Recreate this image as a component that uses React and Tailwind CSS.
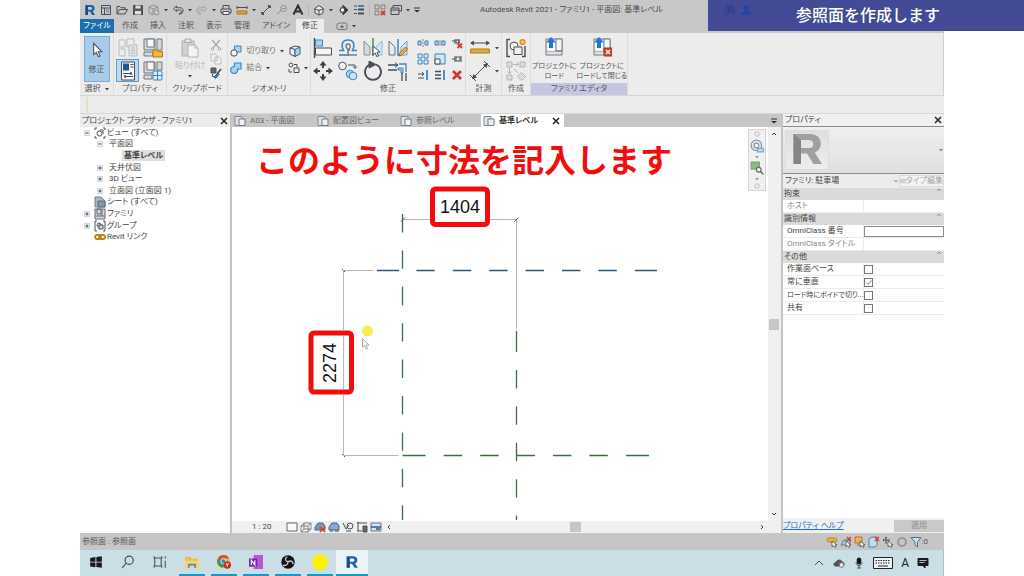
import { useState } from 'react';

const INK = '#484e54';
const BLUE = '#3c86c0';
const SKY = '#a9d2f0';

// Shared svg wrapper, each icon is drawn on its own grid
const Svg = ({ box = 12, className = 'size-3', children }) => (
  <svg
    viewBox={`0 0 ${box} ${box}`}
    className={`shrink-0 ${className}`}
    fill="none"
    stroke={INK}
    strokeWidth="1"
    aria-hidden="true"
  >
    {children}
  </svg>
);

const Caret = ({ color = '#444' }) => (
  <svg viewBox="0 0 4 4" className="size-1 shrink-0" aria-hidden="true">
    <path d="M0 1h4L2 3.4z" fill={color} />
  </svg>
);

const RevitMark = ({ className = 'size-3', color = '#1f5fa8', shade = '#174a86' }) => (
  <svg viewBox="0 0 12 12" className={`shrink-0 ${className}`} aria-hidden="true">
    <path fillRule="evenodd" fill={color} d="M1.5 1h5.3c2.4 0 3.8 1.2 3.8 3.2 0 1.5-.8 2.5-2 3L11 11H8.2L6 7.5H4V11H1.5zM4 3v2.700h2.600c1 0 1.500-.5 1.500-1.300S7.600 3 6.600 3z" />
    <path fill={shade} d="M1.500 1L4 3v8H1.500z" />
  </svg>
);

/* ---------- quick access bar ---------- */

const quickAccess = [
  { name: 'Revit', icon: <RevitMark /> },
  { name: 'ホーム', icon: <Svg><path d="M1.500 1.500h9v9h-9zM1.500 4h9M4.500 4v6.500" /><path d="M6 6h3M6 8h3" stroke={BLUE} /></Svg> },
  { name: '開く', icon: <Svg><path d="M1 10V2.500h3l1 1.200h4V5.500M1 10l2.500-4.500h8L9 10z" /></Svg> },
  { name: '保存', icon: <Svg><path d="M1.500 1.500h9v9h-9z" fill="#555b61" /><path d="M3.500 1.500h5v3h-5zM3 7h6v3.500H3z" fill="#dedede" stroke="none" /></Svg> },
  { name: '同期', icon: <Svg><g stroke="#929292"><path d="M1 3l4-2 5 2v3M1 3v6l4 2M1 3l4 2v6M5 5l5-2" /><circle cx="8.500" cy="8.500" r="2.500" /></g></Svg>, menu: true },
  { name: '元に戻す', icon: <Svg><path d="M4.500 2L1.500 4.800 4.500 7.500V6h3c3 0 2.500 3.500-.5 3.500M4.500 2v1.700h3.200c5 0 4.300 6.500-.7 6.500" /></Svg>, menu: true },
  { name: 'やり直し', icon: <Svg><path stroke="#a2a2a2" d="M7.500 2l3 2.800-3 2.700V6h-3c-3 0-2.500 3.500.5 3.500M7.500 2v1.700H4.300c-5 0-4.300 6.500.7 6.500" /></Svg>, menu: true },
  { name: '印刷', icon: <Svg><path d="M3 5V1.500h6V5M3 9H1V5h10v4H9" /><path d="M3 7.500h6v3H3z" fill="#f2f2f2" /></Svg> },
  { name: '計測', icon: <Svg><path d="M1 3.500h10M1 2v3M11 2v3" /><path d="M1 7h10v3H1z" fill="#e0a52f" stroke="#a87a1c" /></Svg>, menu: true },
  { name: '寸法', icon: <Svg><path d="M2 10l8-8M1 8l3 3M8 1l3 3" /><circle cx="2.500" cy="9.500" r="1" fill={INK} /><circle cx="9.500" cy="2.500" r="1" fill={INK} /></Svg> },
  { name: 'タグ', icon: <Svg><g stroke="#8c8c8c"><circle cx="7.500" cy="4.500" r="3" /><path d="M1 10l4-3.500M6 4.500h3" /></g></Svg> },
  { name: '文字', icon: <Svg><path d="M1.500 10.500L6 1.500l4.500 9M3.500 7.500h5" strokeWidth="2" stroke="#2d3035" /></Svg>, rule: true },
  { name: '3D ビュー', icon: <Svg><path d="M1 5l5-3.500L11 5M2 5v4l4 2 4-2V5L6 6.500z" fill="#e6e6e6" /><path d="M6 6.500V11" /></Svg>, menu: true },
  { name: '断面', icon: <Svg><circle cx="6" cy="6" r="3" fill="#f4f4f4" /><path d="M6 1l5 5-5 5z" fill="#30363b" /><circle cx="5.500" cy="6" r="2.200" fill="#f4f4f4" /></Svg> },
  { name: '細線', icon: <Svg><path d="M1 2h3M1 5.500h3M1 9.500h3" /><path d="M5 2h6" stroke={BLUE} strokeWidth="2" /><path d="M5 5.500h6M5 9.500h6" strokeWidth="2" /></Svg>, rule: true },
  { name: '非表示を閉じる', icon: <Svg><path d="M1 1h4v4H1zM7 1h4v4H7zM1 7h4v4H1z" stroke="#8a7e7e" /><path d="M7 7l4 4M11 7l-4 4" stroke="#d33a2f" strokeWidth="1.800" /></Svg> },
  { name: 'ウィンドウ切替', icon: <Svg><path d="M3 4V1.500h8.500V7H9M1 4h8v6.500H1zM1 6h8" /></Svg>, menu: true },
];

const QuickAccessBar = () => (
  <header className="flex h-[19px] items-center bg-[#c8c8c8]">
    <div className="flex items-center gap-1 pl-1">
      {quickAccess.map((item) => (
        <div key={item.name} className="flex items-center gap-1">
          <button type="button" aria-label={item.name}>{item.icon}</button>
          {item.menu && <Caret />}
          {item.rule && <span className="h-3 w-px bg-[#b5b5b5]" />}
        </div>
      ))}
      <svg viewBox="0 0 6 6" className="size-1.5" aria-hidden="true">
        <path d="M0 .5h6v1H0zM0 3h6L3 5.500z" fill="#333" />
      </svg>
    </div>
    <h1 className="ml-15 text-[8px] leading-3 whitespace-nowrap text-[#4b4b4b]">
      Autodesk Revit 2021 - ファミリ1 - 平面図: 基準レベル
    </h1>
  </header>
);

const RibbonTabs = () => {
  const [active, setActive] = useState('修正');
  return (
    <nav className="flex h-3.5 items-stretch bg-[#c8c8c8]">
      <button type="button" className="mr-0.5 w-[34px] bg-[#1a6fae] text-white">ファイル</button>
      {['作成', '挿入', '注釈', '表示', '管理', 'アドイン', '修正'].map((tab) => (
        <button
          key={tab}
          type="button"
          onClick={() => setActive(tab)}
          className={`px-1.5 ${active === tab ? 'bg-[#ececec] text-[#444]' : 'text-[#555]'}`}
        >
          {tab}
        </button>
      ))}
      <button type="button" aria-label="リボンを最小化" className="ml-3 flex items-center gap-1">
        <Svg className="h-3 w-3"><rect x="1" y="3" width="10" height="6.500" rx="2" stroke="#777" /><path d="M4 7.500h4L6 5z" fill="#555" stroke="none" /></Svg>
        <Caret />
      </button>
    </nav>
  );
};

/* ---------- ribbon ---------- */

const Panel = ({ title, width, menu, accent, children }) => (
  <section className={`flex shrink-0 flex-col border-r border-[#dcdcdc] ${width}`}>
    <div className="flex h-[50px] items-center justify-center pt-0.5">{children}</div>
    <h2 className={`flex h-3 items-center justify-center gap-1 whitespace-nowrap text-[#555] ${accent ? 'bg-[#c6c5e2]' : ''}`}>
      {title}
      {menu && <Caret />}
    </h2>
  </section>
);

const IconButton = ({ label, active, className = 'size-[23px]', children }) => (
  <button
    type="button"
    aria-label={label}
    className={`flex items-center justify-center ${className} ${active ? 'border border-[#5b9bcf] bg-[#bcdaf2]' : ''}`}
  >
    {children}
  </button>
);

const big = 'size-5';

const PropertyIcons = () => (
  <div className="grid grid-cols-2 gap-x-0.5">
    <IconButton label="ファミリ カテゴリ">
      <Svg box={20} className={big}><g stroke="#bdbdbd"><path d="M1 2h6v7H1zM9 1h7v8H9zM1 11h6v7H1z" fill="#ececec" /><path d="M11 7h8v11h-8z" fill="#e2e2e2" /><path d="M13 10h4M13 12.500h4M13 15h4" /></g></Svg>
    </IconButton>
    <IconButton label="ファミリ タイプ">
      <Svg box={20} className={big}><path d="M1 1h11v11H1zM14 1h5v11h-5zM1 14h9v4H1z" fill="#d5d8dc" stroke="#6f767d" /><path d="M4 1h7v8H4z" fill="#f7f7f7" stroke="#6f767d" /><path d="M10 12h4l1 1.500h4.500V19H10z" fill="#f5b92c" stroke="#b17b12" /></Svg>
    </IconButton>
    <IconButton label="プロパティ" active>
      <Svg box={20} className={big}><path d="M3.500 1h13v18h-13z" fill="#f5f7f9" /><path d="M5 2.500h6v7H5z" fill="#205a94" stroke="none" /><path d="M12.500 3.500h3M12.500 6h3M5 12.500h9M7 15.500h8" /><path d="M13 11v3M7 14v3" strokeWidth="1.500" /></Svg>
    </IconButton>
    <IconButton label="タイプ プロパティ">
      <Svg box={20} className={big}><path d="M1 1h11v11H1zM14 1h5v8h-5zM1 14h8v4H1z" fill="#d5d8dc" stroke="#6f767d" /><path d="M4 1h7v8H4z" fill="#f7f7f7" stroke="#6f767d" /><rect x="10" y="10" width="9" height="9" rx="1" fill="#d5eafa" stroke={BLUE} /><path d="M14.500 10v9M10 14.500h9" stroke={BLUE} /></Svg>
    </IconButton>
  </div>
);

const ClipboardIcons = () => (
  <div className="flex w-full justify-between pr-1 pl-2">
    <button type="button" className="flex flex-col items-center gap-0.5 text-[#b5b5b5]">
      <Svg box={20} className="size-5"><path d="M2 3h12v15H2z" fill="#d0d0d0" stroke="#b0b0b0" /><path d="M5 1h6v3.500H5z" fill="#e6e6e6" stroke="#aaa" /><path d="M8 7h7l3 3v9H8z" fill="#f3f3f3" stroke="#b5b5b5" /><path d="M15 7v3h3" stroke="#b5b5b5" /></Svg>
      <span className="leading-3">貼り付け</span>
      <Caret />
    </button>
    <div className="flex flex-col justify-between">
      <IconButton label="切り取り" className="size-3.5"><Svg><path d="M2 1l7 8M10 1L3 9" stroke="#aaa" strokeWidth="1.300" /><circle cx="2.500" cy="10" r="1.300" stroke="#aaa" /><circle cx="9.500" cy="10" r="1.300" stroke="#aaa" /></Svg></IconButton>
      <IconButton label="コピー" className="size-3.5"><Svg><path d="M1 1h4l2 2v5H1zM5 4h4l2 2v5H5z" fill="#f1f1f1" stroke="#bdbdbd" /></Svg></IconButton>
      <IconButton label="タイプ プロパティを一致" className="size-3.5"><Svg><path d="M1 1h5v5H1z" fill="#666" /><path d="M2.500 7v2.500h5" /><path d="M11 2L7 7" strokeWidth="1.800" /><path d="M8 6l1 1.500-3.500 4L4 10z" fill={BLUE} stroke="#26567d" /></Svg></IconButton>
    </div>
  </div>
);

const GeometryIcons = () => (
  <div className="grid grid-cols-[1fr_auto] gap-x-1 gap-y-1">
    <button type="button" className="flex items-center gap-1">
      <Svg><path d="M4.500 1h6.500v6H4.500z" fill={SKY} stroke={BLUE} /><circle cx="4" cy="8" r="3.200" fill="#f6f6f6" /></Svg>
      切り取り
      <Caret />
    </button>
    <IconButton label="面を分割" className="size-3.5"><Svg><path d="M1 3l5 1.500v7L1 9z" fill="#f2f2f2" /><path d="M6 4.500L11 2v7l-5 2.500z" fill={SKY} stroke="#37627f" /><path d="M1 3l5-2 5 1" /></Svg></IconButton>
    <button type="button" className="flex items-center gap-1">
      <Svg><path d="M4.500 1H11v6H7.500A3.500 3.500 0 1 1 4.500 4.500z" fill={SKY} stroke={BLUE} strokeWidth="1.200" /></Svg>
      結合
      <Caret />
    </button>
    <div className="flex items-center gap-1">
      <Svg><circle cx="3" cy="3" r="2" /><path d="M6 2.500h3v3M1 7v3h3M6 6h5v4.500H6z" /></Svg>
      <Caret />
    </div>
  </div>
);

const modifyLarge = [
  ['位置合わせ', <><path d="M1.500 0v20" strokeWidth="1.500" /><path d="M2.500 2h7v6h-7z" fill={SKY} stroke={BLUE} /><path d="M2.500 10h16v7h-16z" fill="#f5f5f5" /></>],
  ['オフセット', <><path d="M1 12.500h4.500C3 8 3.500 2 10 2s7 6 4.500 10.500H19" stroke={BLUE} strokeWidth="1.600" /><path d="M1 17h9V11C7 9 7.500 6 10 6s3 3 1 6v1" stroke="#5b6f80" strokeWidth="1.300" /><path d="M10 17h9" stroke="#5b6f80" strokeWidth="1.300" /></>],
  ['鏡像化 - 軸を選択', <><path d="M1 3l6 6v8H1z" fill="#d6d9dc" stroke="#8a8f94" /><path d="M19 3l-6 6v8h6z" fill="#cfe7f8" stroke="#8ab9dc" /><path d="M10 0v18" stroke="#3d9b45" strokeWidth="1.500" /><path d="M10 8l7 6-3 .3 1.500 3.700-1.700.6-1.500-3.500L10 17z" fill="#fff" /></>],
  ['鏡像化 - 軸を描画', <><path d="M1 3l6 6v8H1z" fill="#e9ebed" stroke="#6d7278" /><path d="M19 3l-6 6v8h6z" fill="#cfe7f8" stroke="#6ba6d2" /><path d="M10 1v17" stroke={BLUE} strokeWidth="1.500" /><path d="M17.500 9l2 2-5.500 6-3 1 .8-3z" fill="#f0b53a" stroke="#8f6a18" /></>],
  ['移動', <path fill="#3a3f44" stroke="none" d="M10 0l3.500 4.500H11V7H9V4.500H6.500zM10 20l-3.500-4.500H9V13h2v2.500h2.500zM0 10l4.500-3.500V9H7v2H4.500v2.500zM20 10l-4.500 3.500V11H13V9h2.500V6.500z" />],
  ['コピー', <><circle cx="4.500" cy="5" r="3.800" fill="#f7f7f7" /><path d="M10 4h7v3M15 5.500l2 2 2-2" /><circle cx="12" cy="13" r="3.800" fill={SKY} stroke={BLUE} /><circle cx="15" cy="15" r="3.800" fill="#cbe5f8" stroke={BLUE} /></>],
  ['回転', <><path d="M13 3.500A8 8 0 1 1 7 3.500" strokeWidth="1.800" /><path d="M6 0l7 3.500L6 7z" fill={INK} /></>],
  ['コーナーへトリム', <><path d="M0 4h10M0 9h9" strokeWidth="1.300" /><path d="M7 1.500l3 2.500-3 2.500" /><path d="M11 3h7v8" stroke={BLUE} strokeWidth="1.300" /><path d="M10 7h5v5h-2V9h-3z" fill={SKY} stroke={BLUE} /><path d="M14 12v8M18 12v8" strokeWidth="1.300" /></>],
];

const modifySmall = [
  ['要素を分割', <><path d="M1 4h3v4H1zM8 4h3v4H8z" fill={SKY} stroke={BLUE} /><path d="M6 2v8" stroke="#b66" strokeDasharray="2 1" /></>],
  ['間隔を指定して分割', <><path d="M1 4h3v4H1zM8 4h3v4H8z" fill={SKY} stroke={BLUE} /><path d="M5 3v6M7 3v6" stroke="#a989a0" /></>],
  ['ピンを解除', <><path d="M1 4h3M4 2v5M5 3h3v3H5zM8 2v5" /><path d="M6.500 6.500l4.500 4.500M11 6.500L6.500 11" stroke="#d63c30" strokeWidth="1.800" /></>],
  ['配列', <><path d="M1 1h4v4H1zM7 1h4v4H7zM1 7h4v4H1zM7 7h4v4H7z" fill="#d7ebf9" stroke={BLUE} /></>],
  ['尺度', <><path d="M1 1h10v10H1z" fill="#cfe6f7" stroke={BLUE} /><path d="M1 6h5v5H1z" fill="#f7f7f7" /></>],
  ['ピン', <path d="M1 6h3M4 3v6M5 4h4v4H5zM10 3v6" />],
  ['要素をトリム', <><path d="M1 5h6M1 9h6M5 3l2 2-2 2" /><path d="M10 1v10" stroke={BLUE} strokeWidth="1.800" /></>],
  ['複数要素をトリム', <><path d="M1 2.500h6M1 6h6M1 9.500h6" strokeWidth="1.300" /><path d="M10 1v10" stroke={BLUE} strokeWidth="1.800" /></>],
  ['削除', <path d="M2 2l8 8M10 2l-8 8" stroke="#d63426" strokeWidth="2.600" />],
];

const ModifyIcons = () => (
  <div className="flex items-center gap-1.5">
    <div className="grid grid-cols-4 gap-x-0.5">
      {modifyLarge.map(([label, art]) => (
        <IconButton key={label} label={label}><Svg box={20} className="size-5">{art}</Svg></IconButton>
      ))}
    </div>
    <div className="grid grid-cols-3 gap-x-0.5 gap-y-px">
      {modifySmall.map(([label, art]) => (
        <IconButton key={label} label={label} className="size-[15px]"><Svg>{art}</Svg></IconButton>
      ))}
    </div>
  </div>
);

const MeasureIcons = () => (
  <div className="flex flex-col">
    <div className="flex items-center gap-1">
      <IconButton label="計測"><Svg box={20} className="size-5"><path d="M1 5h18" /><path d="M0 5l4-2.500v5zM20 5l-4-2.500v5z" fill={INK} stroke="none" /><path d="M.5 11h19v4H.5z" fill="#e3aa38" stroke="#a77c20" /></Svg></IconButton>
      <Caret />
    </div>
    <div className="flex items-center gap-1">
      <IconButton label="平行寸法"><Svg box={20} className="size-5"><path d="M3 17L17 3M0 14l6 6M14 0l6 6" /><path d="M2 18l1.500-5 3.500 3.500zM18 2l-5 1.500L16.500 7z" fill={INK} stroke="none" /></Svg></IconButton>
      <Caret />
    </div>
  </div>
);

const CreateIcons = () => (
  <div className="flex flex-col">
    <IconButton label="グループを作成"><Svg box={20} className="size-5"><path d="M4 1.500H1v17h3M16 18.500h3V8" strokeWidth="1.400" /><circle cx="8" cy="8" r="4" fill="#f7f7f7" /><path d="M8 9h8v7.500H8z" fill="#f1f1f1" /><circle cx="16.500" cy="4" r="2.300" fill="#ffd85a" stroke="#e38a1b" strokeWidth="1.600" /></Svg></IconButton>
    <IconButton label="類似を作成"><Svg box={20} className="size-5"><g stroke="#b5b5b5"><path d="M1 1h5v5H1zM14 1h5v5h-5zM1 14h5v5H1z" fill="#dcdcdc" /><path d="M7 3.500h5M10.500 1.500l2 2-2 2M3.500 7v5M1.500 10.500l2 2 2-2M8 8l4 4" /><path d="M15.500 11.500l4 4-4 4-4-4z" fill="#dcdcdc" /></g></Svg></IconButton>
  </div>
);

const LoadIcon = ({ close }) => (
  <Svg box={20} className="size-5">
    <path d="M2 2h16v16H2z" fill="#dfe2e5" stroke="#757c83" />
    <path d="M12 2h6v12h-6zM2 14h16" fill="#f6f6f6" stroke="#757c83" />
    <path d="M3 3h8v11H3z" fill="#f7f7f7" stroke="none" />
    <path d="M7 0l5 5.500H9V11H5V5.500H2z" fill="#1f79d0" stroke="none" />
    {close && <><path d="M12 11h8v8h-8z" fill="#d8402f" stroke="#b12c1f" /><path d="M14 13l4 4M18 13l-4 4" stroke="#fff" strokeWidth="1.300" /></>}
  </Svg>
);

const Ribbon = () => (
  <div className="flex h-[62px] overflow-hidden border-r border-[#d0d0d0] bg-[#ececec] text-[#777]">
    <Panel title="選択" width="w-[34px]" menu>
      <button type="button" className="flex h-[46px] w-[26px] flex-col items-center justify-evenly border border-[#78abd8] bg-[#a9cbea] text-[#555]">
        <Svg className="size-4"><path d="M3.500 1v8.500l2-1.700L7 11l1.300-.6L7 7.300h2.600z" fill="#fff" strokeWidth=".8" /></Svg>
        修正
      </button>
    </Panel>
    <Panel title="プロパティ" width="w-[53px]"><PropertyIcons /></Panel>
    <Panel title="クリップボード" width="w-[61px]"><ClipboardIcons /></Panel>
    <Panel title="ジオメトリ" width="w-[83px]"><GeometryIcons /></Panel>
    <Panel title="修正" width="w-[155px]"><ModifyIcons /></Panel>
    <Panel title="計測" width="w-[36px]"><MeasureIcons /></Panel>
    <Panel title="作成" width="w-[29px]"><CreateIcons /></Panel>
    <Panel title="ファミリ エディタ" width="w-[97px]" accent>
      <div className="flex h-full w-full justify-between px-px text-[7px] leading-[10px] whitespace-nowrap text-[#555]">
        <button type="button" className="flex flex-col items-center gap-1 pt-0.5"><LoadIcon /><span>プロジェクトに<br />ロード</span></button>
        <button type="button" className="flex flex-col items-center gap-1 pt-0.5"><LoadIcon close /><span>プロジェクトに<br />ロードして閉じる</span></button>
      </div>
    </Panel>
  </div>
);

/* ---------- project browser ---------- */

const CloseX = () => (
  <Svg className="size-2"><path d="M1.500 1.500l9 9M10.500 1.500l-9 9" strokeWidth="2.200" stroke="#222" /></Svg>
);

const treeIcons = {
  views: <Svg><path d="M3 1H1v2M9 1h2v2M3 11H1V9M9 11h2V9" /><circle cx="5.500" cy="6.500" r="2.500" /><path d="M6 3h3v4" /></Svg>,
  sheets: <Svg><path d="M1 1h6l4 4v6H1z" fill="#a9b7c2" stroke="#71808c" /><path d="M4 5h7v6H4z" fill="#8497a5" stroke="#5d6d79" /></Svg>,
  families: <Svg><path d="M1 1h10v10H1z" fill="#d6d8dc" stroke="#646b73" /><path d="M3 1h4v5H3zM8 1v7M1 8h10" stroke="#646b73" /></Svg>,
  groups: <Svg><path d="M3 1H1v10h2M9 1h2v10H9" /><circle cx="5" cy="5" r="2" fill="#d0d8df" /><path d="M5 5h4v4H5z" fill="#cdd5dc" /></Svg>,
  links: <Svg><rect x="1" y="4" width="6" height="4" rx="2" stroke="#c18316" strokeWidth="1.800" /><rect x="5" y="4" width="6" height="4" rx="2" stroke="#c18316" strokeWidth="1.800" /></Svg>,
};

const treeRows = [
  { label: 'ビュー (すべて)', mark: '-', icon: 'views' },
  { label: '平面図', mark: '-', depth: 1 },
  { label: '基準レベル', depth: 2, current: true },
  { label: '天井伏図', mark: '+', depth: 1 },
  { label: '3D ビュー', mark: '+', depth: 1 },
  { label: '立面図 (立面図 1)', mark: '+', depth: 1 },
  { label: 'シート (すべて)', icon: 'sheets' },
  { label: 'ファミリ', mark: '+', icon: 'families' },
  { label: 'グループ', mark: '+', icon: 'groups' },
  { label: 'Revit リンク', icon: 'links' },
];

const indent = ['pl-1', 'pl-[17px]', 'pl-[30px]'];

const ProjectBrowser = () => (
  <aside className="flex w-[152px] shrink-0 flex-col border-r-2 border-[#c4c4c4] bg-white">
    <div className="flex h-[13px] items-center justify-between bg-[#ececec] pr-0.5 pl-0.5">
      <h2>プロジェクト ブラウザ - ファミリ1</h2>
      <button type="button" aria-label="閉じる"><CloseX /></button>
    </div>
    <ul className="grid h-[116px] auto-rows-fr">
      {treeRows.map((row) => (
        <li key={row.label} className={`flex items-center whitespace-nowrap ${indent[row.depth || 0]}`}>
          <span className="mr-1 size-1.5 shrink-0">
            {row.mark && (
              <Svg box={6} className="size-1.5">
                <path d="M.5.5h5v5h-5z" fill="#eef1f4" stroke="#c3cad0" strokeWidth=".7" />
                <path d={row.mark === '+' ? 'M1.500 3h3M3 1.500v3' : 'M1.500 3h3'} stroke="#334a6b" />
              </Svg>
            )}
          </span>
          {row.icon && treeIcons[row.icon]}
          <span className={row.current ? 'ml-0.5 bg-[#dedede] px-0.5 font-bold leading-[11px]' : row.depth ? 'ml-0.5' : 'ml-px'}>{row.label}</span>
        </li>
      ))}
    </ul>
  </aside>
);

/* ---------- drawing view ---------- */

const SheetIcon = () => (
  <Svg><path d="M1 1.500h7v9H1z" fill="#dfe3e6" stroke="#7f8b95" /><path d="M5 4h6v6.500H5z" fill="#eef1f4" stroke="#6e7c88" /></Svg>
);

const ViewTabs = () => (
  <div className="flex h-[13px] items-stretch bg-[#c6c6c6]">
    {['A03 - 平面図', '配置図ビュー', '参照レベル', '基準レベル'].map((tab) => {
      const open = tab === '基準レベル';
      return (
        <button
          key={tab}
          type="button"
          className={`flex w-[83px] items-center gap-1 pr-1 pl-0.5 whitespace-nowrap ${open ? 'bg-white font-bold text-[#333]' : 'text-[#666]'}`}
        >
          <SheetIcon />
          {tab}
          {open && <span className="ml-auto"><CloseX /></span>}
        </button>
      );
    })}
    <button type="button" aria-label="タブ一覧" className="ml-auto pr-1">
      <svg viewBox="0 0 6 6" className="size-1.5" aria-hidden="true"><path d="M0 .5h6v1H0zM0 3h6L3 5.500z" fill="#333" /></svg>
    </button>
  </div>
);

const Drawing = () => (
  <svg viewBox="0 0 536 393" className="h-[393px] w-[536px] shrink-0" fill="none">
    {/* reference planes */}
    <g stroke="#3b6e42" strokeWidth="1.300">
      <path d="M170.500 87v306" strokeDasharray="18.400 18" />
      <path d="M284.500 204v21" />
      <path d="M284.500 243v150" strokeDasharray="18.400 18" />
      <path d="M170.500 328.500h23M394 328.500h23" />
      <path d="M211.800 328.500h170" strokeDasharray="18.400 18" />
    </g>
    <g stroke="#28557c" strokeWidth="1.400">
      <path d="M145 143.500h22M403 143.500h22" />
      <path d="M184.400 143.500h205" strokeDasharray="18.400 18" />
    </g>
    {/* dimension lines */}
    <g stroke="#b9b9b9" strokeWidth="1">
      <path d="M170.500 92.500h114M284.500 92v110" />
      <path d="M111.500 143.500h30M111.500 328.500h55" />
    </g>
    <g stroke="#444" strokeWidth="1">
      <path d="M169 94.500l4-4M282.500 94.500l4-4M110 142l3 3M110 327l3 3" />
    </g>
    <g stroke="#f20d0d" strokeWidth="5" fill="#fff">
      <rect x="200.500" y="62" width="55" height="35.500" rx="3" />
      <rect x="79" y="206" width="40.500" height="59" rx="3" />
    </g>
    <path d="M111.500 143v61M111.500 209v53M111.500 268v61" stroke="#b9b9b9" />
    <g fill="#111" fontFamily="'Liberation Sans', sans-serif" fontSize="18" textAnchor="middle">
      <text x="228" y="86">1404</text>
      <text transform="translate(104 236) rotate(-90)">2274</text>
    </g>
    {/* pointer highlight */}
    <circle cx="135.500" cy="204" r="5.500" fill="#f8ef4d" />
    <path d="M130.500 211.500v9l2-1.800 1.700 3.500 1.500-.7-1.600-3.400h2.900z" fill="#fff" stroke="#999" strokeWidth=".8" />
  </svg>
);

const NavigationBar = () => (
  <div className="absolute top-0.5 right-0.5 flex h-[62px] w-[18px] flex-col items-center justify-between border border-[#d6d6d6] bg-[#f0f0f0] py-px">
    <Svg className="size-1.5"><circle cx="6" cy="6" r="4.500" stroke="#999" /></Svg>
    <Svg className="size-3.5"><circle cx="5.500" cy="5.500" r="4.500" fill="#dfe7ef" stroke="#8797a8" /><circle cx="5.500" cy="5.500" r="2" fill="#fff" stroke="#8797a8" /><path d="M6.500 8h5v3h-5z" fill="#c5dcf0" stroke="#7fa5c9" /></Svg>
    <Caret color="#999" />
    <Svg className="size-3.5"><path d="M1 1h7v6H1z" fill="#8db883" stroke="#78a56f" /><circle cx="7.500" cy="7.500" r="2" fill="#fff" stroke="#667" /><path d="M9 9l2.500 2.500" /></Svg>
    <Caret color="#999" />
    <Svg className="size-1.5"><circle cx="6" cy="6" r="4.500" stroke="#999" /></Svg>
  </div>
);

const viewControls = [
  ['詳細レベル', <path d="M1 2h10v8H1z" fill="#fafafa" stroke="#666" />],
  ['表示スタイル', <path d="M1 5h7v6H1zM1 5l3-3h7v6l-3 3M8 5l3-3M4 2v6h7M4 8l-3 3" stroke="#6a6a6a" strokeWidth=".8" />],
  ['太陽の位置', <><path d="M1 6l3-4h5l2 3v4H1z" fill="#7796b5" stroke="#4c6a8c" /><path d="M6 6l5 5M11 6l-5 5" stroke="#d8402f" strokeWidth="1.700" /></>],
  ['影', <><path d="M1 6l3-4h5l2 3v4H1z" fill="#86abd0" stroke="#41658a" /><path d="M2 10h3M7 10h4" /></>],
  ['トリミング', <><path d="M1 2l3 6 3-4" /><circle cx="8" cy="5" r="3" /><path d="M4 10h5" /></>],
  ['トリミング領域', <><path d="M1 2h10M2 1v9M1 10h5" /><path d="M7 5h4v6H7z" fill="#666" /></>],
  ['一時的な表示', <><path d="M1 2h10v8H1z" fill="#d3e3f1" stroke="#59738c" /><path d="M1 6h10M6 8h4" stroke="#385a7a" strokeWidth="1.500" /></>],
];

const Chevron = ({ d, color = '#444' }) => (
  <svg viewBox="0 0 6 6" className="size-1.5 shrink-0" fill="none" stroke={color} aria-hidden="true"><path d={d} /></svg>
);

const DrawingView = () => (
  <main className="flex min-w-0 flex-1 flex-col bg-white">
    <ViewTabs />
    <div className="flex min-h-0 flex-1">
      <div className="relative flex-1 overflow-hidden">
        <Drawing />
        <p className="absolute top-2.5 left-6 text-[32px] leading-[48px] font-bold whitespace-nowrap text-[#f20d0d] [font-feature-settings:normal]">
          このように寸法を記入します
        </p>
        <NavigationBar />
      </div>
      <div className="flex w-[13px] flex-col items-center justify-between bg-[#f0f0f0] py-1 pr-0.5">
        <Chevron d="M1 4l2-2 2 2" />
        <span className="h-[11px] w-2.5 bg-[#c6c6c6]" />
        <Chevron d="M1 2l2 2 2-2" />
      </div>
    </div>
    <div className="flex h-3 items-center bg-[#f0f0f0] pr-4 pl-5">
      <span className="w-[34px]">1 : 20</span>
      <div className="flex gap-0.5">
        {viewControls.map(([label, art]) => (
          <button key={label} type="button" aria-label={label}><Svg>{art}</Svg></button>
        ))}
      </div>
      <div className="flex flex-1 items-center justify-between pl-1">
        <Chevron d="M4 1L2 3l2 2" />
        <span className="h-2.5 w-[11px] bg-[#c6c6c6]" />
        <Chevron d="M2 1l2 2-2 2" />
      </div>
    </div>
  </main>
);

/* ---------- properties palette ---------- */

const parameters = [
  { group: '拘束' },
  { id: 'host', label: 'ホスト', muted: true },
  { group: '識別情報' },
  { id: 'omni-no', label: 'OmniClass 番号', input: true },
  { id: 'omni-title', label: 'OmniClass タイトル', muted: true },
  { group: 'その他' },
  { id: 'workplane', label: '作業面ベース', checked: false },
  { id: 'vertical', label: '常に垂直', checked: true },
  { id: 'void', label: 'ロード時にボイドで切り...', checked: false, long: true },
  { id: 'shared', label: '共有', checked: false },
];

const ParameterRow = ({ row }) => {
  if (row.group) {
    return (
      <tr className="bg-[#dadada]">
        <th colSpan="2" className="p-0 pl-px text-left font-normal">
          <span className="flex justify-between pr-0.5">{row.group}<Chevron d="M1 3l2-2 2 2" color="#888" /></span>
        </th>
      </tr>
    );
  }
  return (
    <tr className="border-b border-[#ebebeb]">
      <td className={`border-r border-[#ebebeb] p-0 pl-1 whitespace-nowrap ${row.muted ? 'text-[#888]' : ''} ${row.long ? 'text-[7px]' : ''}`}>
        <label htmlFor={row.id}>{row.label}</label>
      </td>
      <td className="p-0">
        {row.checked !== undefined && (
          <span className="relative flex size-[9px]">
            <input id={row.id} type="checkbox" defaultChecked={row.checked} className="peer size-[9px] appearance-none border border-[#777] bg-white" />
            <svg viewBox="0 0 9 9" className="pointer-events-none absolute inset-0 hidden size-[9px] peer-checked:block" fill="none" stroke="#777" aria-hidden="true"><path d="M2 4.500l2 2 3.500-4" /></svg>
          </span>
        )}
        {row.checked === undefined && (
          <input id={row.id} type="text" readOnly={row.muted} className={`block h-[11px] w-full ${row.input ? 'border border-[#8a8a8a]' : ''}`} />
        )}
      </td>
    </tr>
  );
};

const PropertiesPalette = () => (
  <aside className="flex w-[163px] shrink-0 flex-col border-l-2 border-[#c4c4c4] bg-white">
    <div className="flex h-[13px] items-center justify-between border-b border-[#8a8a8a] bg-[#f0f0f0] px-0.5">
      <h2>プロパティ</h2>
      <button type="button" aria-label="閉じる"><CloseX /></button>
    </div>
    <div className="flex h-[47px] items-center justify-between border-b border-[#8a8a8a] bg-linear-to-b from-[#efefef] to-[#e0e0e0] pr-px pl-0.5">
      <div className="flex h-10 w-11 items-start justify-center border border-[#dedede] bg-linear-to-b from-[#dfdfdf] to-[#ededed]">
        <RevitMark className="size-9" color="#a0a0a0" shade="#858585" />
      </div>
      <Caret color="#888" />
    </div>
    <div className="flex h-3.5 items-center justify-between bg-[#ececec] pl-0.5 whitespace-nowrap">
      <div className="flex w-[114px] items-center gap-0.5">
        <label htmlFor="family">ファミリ:</label>
        <select id="family" className="min-w-0 flex-1 appearance-none bg-transparent">
          <option>駐車場</option>
        </select>
        <Chevron d="M1 2l2 2 2-2" color="#888" />
      </div>
      <button type="button" className="flex h-3 items-center border border-[#dcdcdc] bg-[#f3f3f3] text-[#a5a5a5]">
        <Svg className="size-1.5"><path d="M1 2h4v3H1zM7 2h4v3H7zM1 7h4v3H1zM7 7h4v3H7z" stroke="#aaa" /></Svg>
        タイプ編集
      </button>
    </div>
    <table className="h-[126px] w-full table-fixed border-collapse">
      <colgroup><col className="w-1/2" /><col /></colgroup>
      <tbody>
        {parameters.map((row) => <ParameterRow key={row.id || row.group} row={row} />)}
      </tbody>
    </table>
    <div className="mt-auto flex h-[15px] items-center justify-between bg-[#f0f0f0]">
      <a href="#help" className="text-[#1d6fc0] underline">プロパティ ヘルプ</a>
      <button type="button" className="h-3 w-[50px] bg-[#c9c9c9] text-[#8c8c8c]">適用</button>
    </div>
  </aside>
);

/* ---------- status bar and taskbar ---------- */

const RedX = () => <path d="M7 1l4 4M11 1L7 5" stroke="#d63c30" strokeWidth="1.500" />;
const Arrow = () => <path d="M6 5v6l1.500-1.500L9 11.500l1-.6-1-2h2z" fill="#fff" strokeWidth=".8" />;

const StatusBar = () => (
  <footer className="flex h-[17px] items-center justify-between bg-[#c6c6c6] pr-4 pl-0.5 text-[#555]">
    <span>参照面 : 参照面</span>
    <div className="flex items-center gap-0.5">
      <Svg><rect x="1" y="2" width="10" height="4" rx="2" fill="#eab33c" stroke="#b88418" /><Arrow /></Svg>
      <Svg><path d="M1 9l3-5h6v5z" fill="#a9c9e4" stroke="#567a9b" /><RedX /><Arrow /></Svg>
      <Svg><path d="M1 1h7v6H1z" fill="#f3b25c" stroke="#c06f1e" /><path d="M3 9h3" stroke="#c06f1e" /><Arrow /></Svg>
      <Svg><path d="M1 3l3-2h5v8l-2 2H1z" fill="#c3dcf0" stroke="#4d86b5" /><RedX /></Svg>
      <Svg><path d="M4 1v7M1 4h7M3 2l1-1 1 1M2 3L1 4l1 1" /><Arrow /></Svg>
      <Svg><circle cx="6" cy="6" r="4" stroke="#999" strokeWidth="2" /></Svg>
      <span className="flex items-center">
        <Svg><path d="M1 1.500h10L7.500 6v5L5 9V6z" fill="#d3e0ea" stroke="#4f6d87" /></Svg>
        :0
      </span>
    </div>
  </footer>
);

const taskItems = [
  { name: 'スタート', art: <path d="M1 2.500l4.500-.7v4H1zM6.300 1.700L11 1v4.800H6.300zM1 6.500h4.500v4L1 9.800zM6.300 6.500H11V11l-4.700-.7z" fill="#1a1a1a" stroke="none" /> },
  { name: '検索', art: <><circle cx="7" cy="4.500" r="3.500" /><path d="M4.500 7L1 11" /></> },
  { name: 'タスク ビュー', art: <path d="M1 1v1.500h6.500V1M1 11V9.500h6.500V11M1.500 2.500v7M7 2.500v7M10.500 1v2M10.500 5v6" strokeWidth=".9" /> },
  { name: 'エクスプローラー', running: true, art: <><path d="M0 1.500h4.500l1 1.500H11v8H0z" fill="#f2bd42" stroke="none" /><path d="M0 5h12v6H0z" fill="#fbd66f" stroke="none" /><path d="M2.500 11V7.500h7V11H8V9H4v2z" fill="#3e8ed0" stroke="none" /></> },
  { name: 'Chrome', running: true, art: <><circle cx="5.500" cy="5.500" r="5.500" fill="#e7b928" stroke="none" /><path d="M.7 3A5.500 5.500 0 0 1 10.400 3H5.500L3 6z" fill="#d94b3a" stroke="none" /><path d="M.7 3A5.500 5.500 0 0 0 5 11l2-3.500-3-1z" fill="#3b9a55" stroke="none" /><circle cx="5.500" cy="5.300" r="2.200" fill="#4184d6" stroke="#fff" strokeWidth=".7" /><circle cx="8.800" cy="8.500" r="3.200" fill="#b5371f" stroke="none" /><path d="M7.700 7l1.100 1.600L9.900 7M8.800 8.600V10" stroke="#fff" strokeWidth=".8" /></> },
  { name: 'OneNote', running: true, art: <><path d="M4 0h8v12H4z" fill="#b858d3" stroke="none" /><path d="M0 3h7v7H0z" fill="#7524a2" stroke="none" /><path d="M2 8.500v-4l3 4v-4" stroke="#fff" /></> },
  { name: 'OBS', running: true, art: <><circle cx="6" cy="6" r="5.800" fill="#111" stroke="none" /><path d="M6 6C3 5 3.500 2 5.500 1.500M6 6c2.500-2 4.500 0 4.300 2M6 6c0 3-3 3.500-4.500 2.500" stroke="#d2d2d2" strokeWidth="1.100" /></> },
  { name: 'ポインター', running: true, round: true, art: <circle cx="6" cy="6" r="6" fill="#fff20a" stroke="none" /> },
];

const Taskbar = () => (
  <nav className="flex h-[26px] items-stretch justify-between bg-[#c9dee5]">
    <div className="flex">
      {taskItems.map((item) => (
        <button key={item.name} type="button" aria-label={item.name} className="flex w-8 flex-col items-center">
          <span className="flex flex-1 items-center"><Svg className={item.round ? 'size-4' : 'size-3.5'}>{item.art}</Svg></span>
          <span className={`h-0.5 w-[26px] ${item.running ? 'bg-[#1696cf]' : ''}`} />
        </button>
      ))}
      <button type="button" aria-label="Revit" className="flex w-8 flex-col items-center bg-[#eaf3f6]">
        <span className="flex flex-1 items-center"><RevitMark className="size-3.5" /></span>
        <span className="h-0.5 w-full bg-[#1696cf]" />
      </button>
    </div>
    <div className="flex items-center gap-2 border-r border-[#a9bfc7] pr-3.5 text-[12px] text-[#222]">
      <Svg><path d="M2 8l4-4 4 4" /></Svg>
      <Svg><path d="M3 9C0 9 .5 5.500 3 5.500 4 2 8.500 2.500 9 5c2.500 0 3 4 0 4z" fill="#555" /><circle cx="8.500" cy="8" r="2.300" fill="#eee" stroke="#777" /></Svg>
      <Svg><rect x="4.200" y="1" width="3.600" height="6" rx="1.800" fill="#111" stroke="#111" /><path d="M3 5.500c0 4 6 4 6 0M6 9v2M4 11h4" /></Svg>
      <svg viewBox="0 0 20 12" className="h-3 w-5" fill="none" stroke="#222" aria-hidden="true"><path d="M.5.5h19v11H.5z" fill="#edf4f6" /><path d="M2.500 3.500h15M2.500 6h15" strokeDasharray="1.500 1" /><path d="M5 9h10" /></svg>
      <span>A</span>
      <Svg><path d="M1 1.500h10v7H8v2.500L5.500 8.500H1z" fill="#1b1b1b" stroke="#1b1b1b" /><path d="M2.500 3.500h7M2.500 5.500h5" stroke="#d9e6ea" strokeWidth=".8" /></Svg>
    </div>
  </nav>
);

const ChapterCaption = () => (
  <div className="absolute top-0 right-0 flex h-[31px] w-[316px] justify-between bg-[#434b96] pr-[84px] pl-4">
    <div className="flex h-[19px] items-center gap-1">
      <Svg><g stroke="#2f3a8c"><circle cx="3" cy="8" r="2" /><circle cx="9" cy="8" r="2" /><path d="M2 6l1.500-4h1.500v5M10 6L8.500 2H7v5M5 5h2" /></g></Svg>
      <Svg><path d="M6 1a2.700 2.700 0 0 1 1.500 5v1L11 9v2H1V9l3.500-2V6A2.700 2.700 0 0 1 6 1z" fill="#2a43a0" stroke="none" /></Svg>
    </div>
    <p className="self-center text-[16px] leading-6 font-medium text-white [font-feature-settings:normal]">参照面を作成します</p>
  </div>
);

export default function App() {
  return (
    <div className="relative min-h-screen overflow-hidden bg-white px-20 font-['Roboto','Noto_Sans_CJK_JP',sans-serif] text-[8px] leading-3 text-[#444] [font-feature-settings:'palt']">
      <div className="flex min-h-screen flex-col">
        <QuickAccessBar />
        <RibbonTabs />
        <Ribbon />
        <div className="flex h-[19px] border-y border-[#d6d6d6] bg-[#ececec] py-px pl-1.5">
          <span className="w-0.5 bg-[#dce6bd]" />
        </div>
        <div className="flex flex-1">
          <ProjectBrowser />
          <DrawingView />
          <PropertiesPalette />
        </div>
        <StatusBar />
        <Taskbar />
      </div>
      <ChapterCaption />
    </div>
  );
}
